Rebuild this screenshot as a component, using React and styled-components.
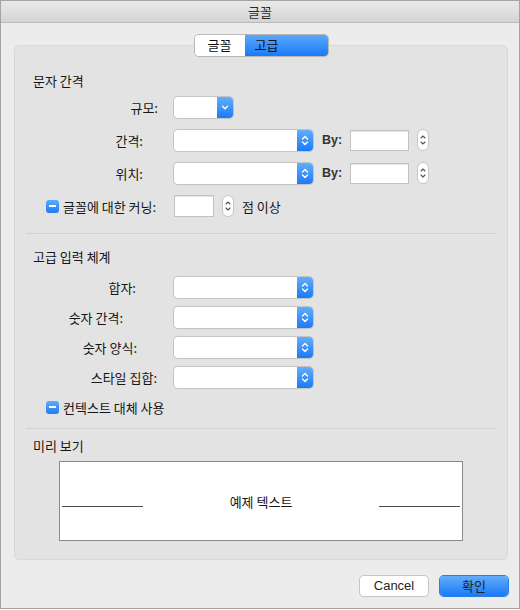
// ===== import base =====
import React from "react"
import styled, { createGlobalStyle } from "styled-components"

// ===== global =====
const GlobalStyle = createGlobalStyle`
    html, body {
        margin : 0;
        padding : 0;
        background : #ffffff;
    }
    body {
        font-family : "Noto Sans CJK KR", "Noto Sans", sans-serif;
        font-size : 13px;
        color : #161616;
    }
    * {
        box-sizing : border-box;
    }
`

// ===== style : window =====
const Window = styled.div`
    width : 520px;
    height : 609px;
    display : flex;
    flex-direction : column;
    background : #ececec;
    border : 1px solid #a4a4a4;
`
const TitleBar = styled.div`
    height : 22px;
    line-height : 21px;
    text-align : center;
    color : #2b2b2b;
    background : linear-gradient(#eaeaea, #d4d4d4);
    border-bottom : 1px solid #b9b9b9;
`
const Body = styled.div`
    flex : 1;
    display : flex;
    flex-direction : column;
    padding : 12px 11px 0 13px;
`

// ===== style : tabs =====
const TabBar = styled.div`
    position : relative;
    z-index : 1;
    display : flex;
    justify-content : center;
    height : 21px;
`
const Segmented = styled.div`
    display : flex;
    border-radius : 4px;
    overflow : hidden;
    box-shadow : 0 0 0 1px #b8b8b8, 0 1px 1px rgba(0,0,0,0.12);
`
const Segment = styled.div`
    width : ${p => p.$w}px;
    height : 21px;
    line-height : 20px;
    padding-left : ${p => p.$pl || 0}px;
    text-align : ${p => p.$pl ? "left" : "center"};
    color : #111;
    background : ${p => p.$active ? "linear-gradient(#5aa8fb, #1a7af6)" : "#ffffff"};
`

// ===== style : panel =====
const Panel = styled.div`
    margin-top : -11px;
    height : 515px;
    background : #e3e3e3;
    border : 1px solid #d8d8d8;
    border-radius : 5px;
    display : flex;
    flex-direction : column;
`
const Section = styled.div`
    padding-top : ${p => p.$pt}px;
    display : flex;
    flex-direction : column;
`
const SectionTitle = styled.div`
    height : 20px;
    line-height : 20px;
    padding-left : 18px;
`
const Divider = styled.div`
    margin : ${p => p.$mt}px 11px 0;
    height : 1px;
    background : #d2d2d2;
`
const Rows = styled.div`
    display : flex;
    flex-direction : column;
    margin-top : ${p => p.$mt}px;
    gap : ${p => p.$gap}px;
`
const Row = styled.div`
    height : 22px;
    display : flex;
    align-items : center;
    padding-left : ${p => p.$pl || 0}px;
`
const Label = styled.div`
    width : 151px;
    margin-right : 8px;
    padding-right : ${p => p.$pr}px;
    text-align : right;
    white-space : nowrap;
`
const Text = styled.span`
    width : ${p => p.$w ? `${p.$w}px` : "auto"};
    margin-left : ${p => p.$ml || 0}px;
    white-space : nowrap;
`
const ByLabel = styled.span`
    margin : 0 8px 0 9px;
    font-family : "Liberation Sans", Arial, sans-serif;
    font-weight : bold;
    font-size : 12.5px;
    color : #333;
`

// ===== style : controls =====
const PopupBox = styled.div`
    width : ${p => p.$w}px;
    height : 21px;
    display : flex;
    justify-content : flex-end;
    background : #ffffff;
    border-radius : 4px;
    box-shadow : 0 0 0 1px #c4c4c4, 0 1px 1px rgba(0,0,0,0.1);
`
const PopupArrow = styled.div`
    width : 16px;
    height : 21px;
    display : flex;
    align-items : center;
    justify-content : center;
    border-radius : 0 4px 4px 0;
    background : linear-gradient(#64aefb, #1b7af6);
`
const TextField = styled.div`
    width : ${p => p.$w}px;
    height : ${p => p.$h || 21}px;
    background : #ffffff;
    border : 1px solid #c2c2c2;
    box-shadow : inset 0 1px 0 #e6e6e6;
`
const StepperBox = styled.div`
    width : 12px;
    height : 22px;
    margin-left : 8px;
    margin-right : ${p => p.$mr || 0}px;
    display : flex;
    align-items : center;
    justify-content : center;
    background : #ffffff;
    border : 1px solid #c6c6c6;
    border-radius : 6px;
`
const CheckBox = styled.div`
    width : 13px;
    height : 13px;
    display : flex;
    align-items : center;
    justify-content : center;
    border-radius : 3px;
    background : linear-gradient(#5eabfb, #1d7cf6);
    &::after {
        content : "";
        width : 7px;
        height : 2px;
        background : #ffffff;
    }
`

// ===== style : preview =====
const PreviewBox = styled.div`
    width : 404px;
    height : 80px;
    margin : 5px auto 0;
    display : flex;
    align-items : center;
    justify-content : space-between;
    padding : 0 2px;
    background : #ffffff;
    border : 1px solid #8a8a8a;
`
const PreviewLine = styled.div`
    width : 81px;
    height : 1px;
    margin-top : 10px;
    background : #4a4a4a;
`

// ===== style : footer =====
const Footer = styled.div`
    display : flex;
    justify-content : flex-end;
    gap : 12px;
    padding-top : 16px;
`
const Button = styled.div`
    width : 68px;
    height : 20px;
    line-height : 19px;
    text-align : center;
    border-radius : 4px;
    font-family : ${p => p.$primary ? `"Noto Sans CJK KR", sans-serif` : `"Liberation Sans", Arial, sans-serif`};
    font-size : 13px;
    color : #1f1f1f;
    background : ${p => p.$primary ? "linear-gradient(#63adfb, #1a79f6)" : "#ffffff"};
    box-shadow : 0 0 0 1px ${p => p.$primary ? "#2a7ee8" : "#c6c6c6"}, 0 1px 1px rgba(0,0,0,0.12);
`

// ===== component =====
const Popup = ({ width, single }) => (
    <PopupBox $w={width}>
        <PopupArrow>
            <svg width="16" height="21" viewBox="0 0 16 21" fill="none" stroke="#fff" strokeWidth="1.4" strokeLinecap="round" strokeLinejoin="round">
                {single
                    ? <path d="M5.5 9.2 L8 11.7 L10.5 9.2" />
                    : <><path d="M5.5 9 L8 6.6 L10.5 9" /><path d="M5.5 12 L8 14.4 L10.5 12" /></>}
            </svg>
        </PopupArrow>
    </PopupBox>
)

const Stepper = ({ mr }) => (
    <StepperBox $mr={mr}>
        <svg width="10" height="20" viewBox="0 0 10 20" fill="none" stroke="#555" strokeWidth="1.1" strokeLinecap="round" strokeLinejoin="round">
            <path d="M3 8 L5 6 L7 8" />
            <path d="M3 12 L5 14 L7 12" />
        </svg>
    </StepperBox>
)

const App = () => {
    return (
        <React.Fragment>
            <GlobalStyle />
            <Window>
                <TitleBar>글꼴</TitleBar>
                <Body>
                    <TabBar>
                        <Segmented>
                            <Segment $w={50}>글꼴</Segment>
                            <Segment $w={83} $active $pl={10}>고급</Segment>
                        </Segmented>
                    </TabBar>

                    <Panel>
                        <Section $pt={25}>
                            <SectionTitle>문자 간격</SectionTitle>
                            <Rows $mt={5} $gap={11}>
                                <Row>
                                    <Label $pr={8}>규모:</Label>
                                    <Popup width={59} single />
                                </Row>
                                <Row>
                                    <Label $pr={23}>간격:</Label>
                                    <Popup width={139} />
                                    <ByLabel>By:</ByLabel>
                                    <TextField $w={59} />
                                    <Stepper />
                                </Row>
                                <Row>
                                    <Label $pr={23}>위치:</Label>
                                    <Popup width={139} />
                                    <ByLabel>By:</ByLabel>
                                    <TextField $w={59} />
                                    <Stepper />
                                </Row>
                                <Row $pl={31}>
                                    <CheckBox />
                                    <Text $ml={4} $w={111}>글꼴에 대한 커닝:</Text>
                                    <TextField $w={40} $h={22} />
                                    <Stepper mr={8} />
                                    <Text>점 이상</Text>
                                </Row>
                            </Rows>
                        </Section>

                        <Divider $mt={16} />

                        <Section $pt={13}>
                            <SectionTitle>고급 입력 체계</SectionTitle>
                            <Rows $mt={9} $gap={8}>
                                <Row>
                                    <Label $pr={30}>합자:</Label>
                                    <Popup width={139} />
                                </Row>
                                <Row>
                                    <Label $pr={43}>숫자 간격:</Label>
                                    <Popup width={139} />
                                </Row>
                                <Row>
                                    <Label $pr={29}>숫자 양식:</Label>
                                    <Popup width={139} />
                                </Row>
                                <Row>
                                    <Label $pr={9}>스타일 집합:</Label>
                                    <Popup width={139} />
                                </Row>
                                <Row $pl={31}>
                                    <CheckBox />
                                    <Text $ml={4}>컨텍스트 대체 사용</Text>
                                </Row>
                            </Rows>
                        </Section>

                        <Divider $mt={10} />

                        <Section $pt={7}>
                            <SectionTitle>미리 보기</SectionTitle>
                            <PreviewBox>
                                <PreviewLine />
                                <Text>예제 텍스트</Text>
                                <PreviewLine />
                            </PreviewBox>
                        </Section>
                    </Panel>

                    <Footer>
                        <Button>Cancel</Button>
                        <Button $primary>확인</Button>
                    </Footer>
                </Body>
            </Window>
        </React.Fragment>
    )
}

export default App
